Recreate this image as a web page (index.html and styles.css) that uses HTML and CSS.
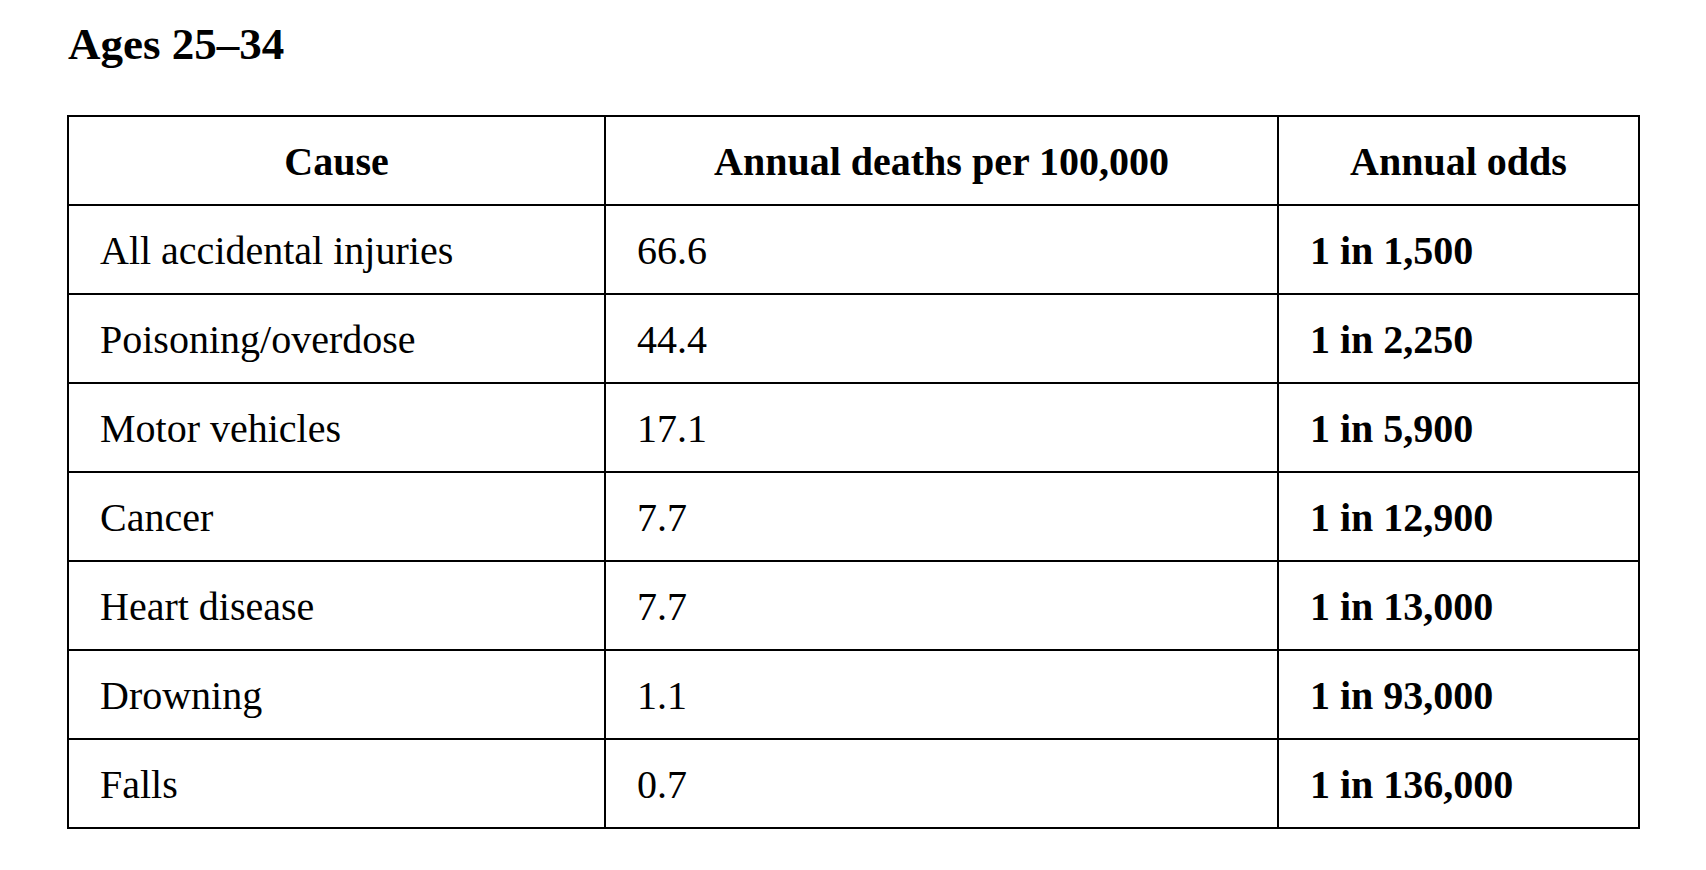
FILE: index.html
```html
<!DOCTYPE html>
<html lang="en">
<head>
<meta charset="utf-8">
<title>Ages 25–34</title>
<link rel="stylesheet" href="styles.css">
</head>
<body>
<main class="page">
  <h1 class="title">Ages 25–34</h1>
  <table class="odds">
    <colgroup>
      <col class="c1">
      <col class="c2">
      <col class="c3">
    </colgroup>
    <thead>
      <tr>
        <th>Cause</th>
        <th>Annual deaths per 100,000</th>
        <th>Annual odds</th>
      </tr>
    </thead>
    <tbody>
      <tr><td>All accidental injuries</td><td>66.6</td><td class="b">1 in 1,500</td></tr>
      <tr><td>Poisoning/overdose</td><td>44.4</td><td class="b">1 in 2,250</td></tr>
      <tr><td>Motor vehicles</td><td>17.1</td><td class="b">1 in 5,900</td></tr>
      <tr><td>Cancer</td><td>7.7</td><td class="b">1 in 12,900</td></tr>
      <tr><td>Heart disease</td><td>7.7</td><td class="b">1 in 13,000</td></tr>
      <tr><td>Drowning</td><td>1.1</td><td class="b">1 in 93,000</td></tr>
      <tr><td>Falls</td><td>0.7</td><td class="b">1 in 136,000</td></tr>
    </tbody>
  </table>
</main>
</body>
</html>
```
FILE: styles.css
```css
html, body {
  margin: 0;
  padding: 0;
  background: #ffffff;
  color: #000000;
  font-family: "Liberation Serif", "Times New Roman", serif;
}

.page {
  padding: 18px 0 0 67px;
}

.title {
  margin: 0 0 45px 1px;
  font-size: 45px;
  line-height: 52px;
  font-weight: bold;
}

.odds {
  border-collapse: collapse;
  table-layout: fixed;
  width: 1571px;
  font-size: 40px;
  line-height: 46px;
}

.c1 { width: 537px; }
.c2 { width: 673px; }
.c3 { width: 361px; }

.odds th,
.odds td {
  border: 2px solid #000000;
  vertical-align: middle;
  padding: 3px 10px 0 31px;
}

.odds th {
  height: 84px;
  text-align: center;
  font-weight: bold;
  padding-left: 0;
  padding-right: 0;
}

.odds td {
  height: 84px;
  text-align: left;
  font-weight: normal;
}

.odds td.b {
  font-weight: bold;
}
```
